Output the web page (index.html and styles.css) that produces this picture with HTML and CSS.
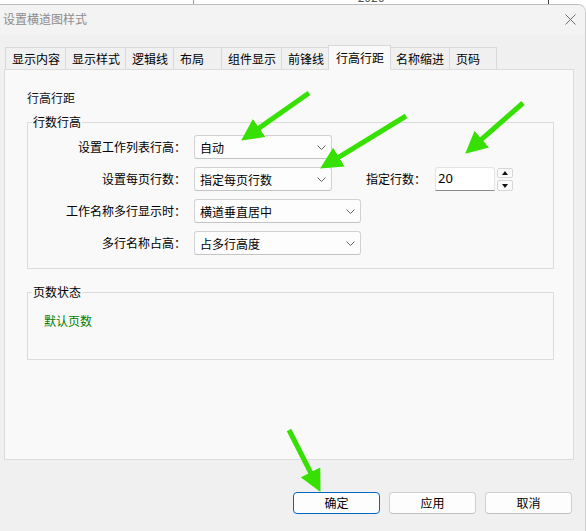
FILE: index.html
```html
<!DOCTYPE html>
<html lang="zh-CN">
<head>
  <meta charset="UTF-8" />
  <meta name="viewport" content="width=device-width,initial-scale=1.0" />
  <title>设置横道图样式</title>
  <link rel="stylesheet" href="styles.css">
</head>
<body>
  <div class="backdrop">
    <div class="bd-cell bd-first"></div>
    <div class="bd-cell bd-year"><span>2026</span></div>
    <div class="bd-cell bd-last"></div>
  </div>

  <div class="dialog">
    <div class="titlebar">
      <span class="title">设置横道图样式</span>
      <span class="close" aria-label="关闭">
        <svg width="11" height="11" viewBox="0 0 11 11"><path d="M0.5 0.5 L10.5 10.5 M10.5 0.5 L0.5 10.5" stroke="#6a6a6a" stroke-width="1" fill="none"/></svg>
      </span>
    </div>

    <div class="dialog-body">
      <div class="tabs">
        <div class="tab">显示内容</div>
        <div class="tab">显示样式</div>
        <div class="tab">逻辑线</div>
        <div class="tab">布局</div>
        <div class="tab">组件显示</div>
        <div class="tab">前锋线</div>
        <div class="tab active">行高行距</div>
        <div class="tab">名称缩进</div>
        <div class="tab last">页码</div>
      </div>

      <div class="panel">
        <div class="panel-title">行高行距</div>

        <fieldset class="group group-rows">
          <legend>行数行高</legend>
          <div class="row">
            <label class="row-label">设置工作列表行高：</label>
            <div class="combo">
              <span>自动</span>
              <svg class="chev" width="9" height="5" viewBox="0 0 9 5"><polyline points="0.5,0.5 4.5,4.5 8.5,0.5" stroke="#606060" fill="none"/></svg>
            </div>
          </div>
          <div class="row">
            <label class="row-label">设置每页行数：</label>
            <div class="combo">
              <span>指定每页行数</span>
              <svg class="chev" width="9" height="5" viewBox="0 0 9 5"><polyline points="0.5,0.5 4.5,4.5 8.5,0.5" stroke="#606060" fill="none"/></svg>
            </div>
            <label class="spin-label">指定行数：</label>
            <div class="spin-input">20</div>
            <div class="spin-btns">
              <div class="spin-btn">
                <svg width="6" height="4" viewBox="0 0 6 4"><polygon points="3,0 6,4 0,4" fill="#111"/></svg>
              </div>
              <div class="spin-btn">
                <svg width="6" height="4" viewBox="0 0 6 4"><polygon points="0,0 6,0 3,4" fill="#111"/></svg>
              </div>
            </div>
          </div>
          <div class="row">
            <label class="row-label">工作名称多行显示时：</label>
            <div class="combo combo-wide">
              <span>横道垂直居中</span>
              <svg class="chev" width="9" height="5" viewBox="0 0 9 5"><polyline points="0.5,0.5 4.5,4.5 8.5,0.5" stroke="#606060" fill="none"/></svg>
            </div>
          </div>
          <div class="row">
            <label class="row-label">多行名称占高：</label>
            <div class="combo combo-wide">
              <span>占多行高度</span>
              <svg class="chev" width="9" height="5" viewBox="0 0 9 5"><polyline points="0.5,0.5 4.5,4.5 8.5,0.5" stroke="#606060" fill="none"/></svg>
            </div>
          </div>
        </fieldset>

        <fieldset class="group group-pages">
          <legend>页数状态</legend>
          <div class="page-state">默认页数</div>
        </fieldset>
      </div>

      <div class="actions">
        <button class="btn btn-default">确定</button>
        <button class="btn">应用</button>
        <button class="btn">取消</button>
      </div>
    </div>
  </div>

  <!-- annotation arrows drawn over the screenshot -->
  <svg class="annotations" width="586" height="531" viewBox="0 0 586 531">
    <defs>
      <marker id="head" markerUnits="userSpaceOnUse" markerWidth="22" markerHeight="22" viewBox="0 0 22 22" refX="11" refY="11" orient="auto">
        <path d="M0,0 L22,11 L0,22 z" fill="#36e000"/>
      </marker>
    </defs>
    <line x1="309" y1="93" x2="250.2" y2="134.3" class="arrow" marker-end="url(#head)"/>
    <line x1="406" y1="116" x2="329.5" y2="162.8" class="arrow" marker-end="url(#head)"/>
    <line x1="523" y1="103" x2="473.5" y2="146.4" class="arrow" marker-end="url(#head)"/>
    <line x1="289" y1="430" x2="315.5" y2="482.1" class="arrow" marker-end="url(#head)"/>
  </svg>
</body>
</html>
```

FILE: styles.css
```css
* { margin: 0; padding: 0; box-sizing: border-box; }
html, body { width: 586px; height: 531px; overflow: hidden; }
body {
  background: #fff;
  font-family: "Noto Sans CJK SC", "Noto Sans", sans-serif;
  font-size: 12px;
  color: #000;
  position: relative;
}

/* window behind the dialog */
.backdrop {
  height: 4px;
  display: flex;
  overflow: hidden;
  background: #fff;
}
.bd-cell { height: 4px; }
.bd-first { width: 194px; border-right: 1px solid #9c9c9c; }
.bd-year {
  width: 355px;
  border-right: 1px solid #3c3c3c;
  text-align: center;
  color: #555;
  font-size: 12px;
  line-height: 12px;
}
.bd-year span { display: block; margin-top: -9px; }
.bd-last { flex: 1; }

/* dialog */
.dialog {
  width: 586px;
  height: 527px;
  background: #f0f0f0;
  border-top: 1px solid #bcbcbc;
  border-right: 1px solid #cfcfcf;
  border-top-right-radius: 8px;
  overflow: hidden;
}
.titlebar {
  height: 30px;
  background: #f3f3f3;
  display: flex;
  align-items: center;
  padding: 0 0 2px 3px;
}
.title { color: #8c8c8c; font-size: 12px; line-height: 16px; }
.close { margin-left: auto; margin-right: 9px; display: flex; }

.dialog-body { padding: 10px 11px 0 4px; }

/* tabs */
.tabs {
  display: flex;
  align-items: flex-end;
  height: 24px;
  padding-left: 1px;
}
.tab {
  height: 22px;
  min-width: 48px;
  padding: 0 5px 0 6px;
  line-height: 21px;
  background: #f0f0f0;
  border-top: 1px solid #d9d9d9;
  border-left: 1px solid #d9d9d9;
  white-space: nowrap;
}
.tab.last { border-right: 1px solid #d9d9d9; }
.tab.active {
  height: 25px;
  line-height: 23px;
  padding: 0 6px 0 7px;
  margin: 0 -2px -1px -1px;
  background: #f9f9f9;
  border: 1px solid #d9d9d9;
  border-bottom: none;
  position: relative;
  z-index: 1;
}

/* tab page */
.panel {
  height: 391px;
  background: #f9f9f9;
  border: 1px solid #dcdcdc;
  padding: 20px 19px 0 22px;
}
.panel-title { line-height: 16px; color: #111; }

.group {
  border: 1px solid #dcdcdc;
  min-width: 0;
}
.group legend {
  margin-left: 4px;
  padding: 0 1px;
  line-height: 16px;
}
.group-rows { margin-top: 8px; padding: 5px 0 13px 0; }
.group-pages { margin-top: 15px; padding: 13px 0 30px 0; }
.page-state { color: #008000; line-height: 16px; padding-left: 16px; }

.row {
  display: flex;
  align-items: center;
  height: 24px;
  margin-bottom: 8px;
}
.row:last-child { margin-bottom: 0; }
.row-label {
  width: 158px;
  margin-right: 8px;
  text-align: right;
  white-space: nowrap;
  line-height: 16px;
}

.combo {
  width: 138px;
  height: 24px;
  display: flex;
  align-items: center;
  justify-content: space-between;
  padding: 0 5px 0 5px;
  background: #fdfdfd;
  border: 1px solid #d2d2d2;
  border-bottom-color: #c4c4c4;
  border-radius: 3px;
}
.combo-wide { width: 167px; }
.chev { display: block; }

.spin-label { margin-left: 34px; white-space: nowrap; line-height: 16px; }
.spin-input {
  width: 60px;
  height: 24px;
  margin-left: 9px;
  padding-left: 2px;
  background: #fff;
  border: 1px solid #e4e4e4;
  border-bottom: 1px solid #8a8a8a;
  border-radius: 3px 3px 0 0;
  font-family: "Noto Sans", "Noto Sans CJK SC", sans-serif;
  font-size: 13px;
  line-height: 20px;
}
.spin-btns {
  display: flex;
  flex-direction: column;
  gap: 2px;
  margin-left: 2px;
  margin-top: 1px;
  align-self: flex-start;
}
.spin-btn {
  width: 16px;
  height: 10px;
  display: flex;
  align-items: center;
  justify-content: center;
  background: #fbfbfb;
  border: 1px solid #d6d6d6;
  border-radius: 2px;
}
.spin-btn + .spin-btn { height: 11px; }

/* buttons */
.actions {
  display: flex;
  justify-content: flex-end;
  gap: 9px;
  margin-top: 32px;
  padding-right: 2px;
}
.btn {
  width: 87px;
  height: 22px;
  font-family: inherit;
  font-size: 12px;
  line-height: 20px;
  color: #000;
  background: #fdfdfd;
  border: 1px solid #d0d0d0;
  border-bottom-color: #c0c0c0;
  border-radius: 4px;
}
.btn-default { border-color: #0067c0; }

/* annotations */
.annotations {
  position: absolute;
  top: 0;
  left: 0;
  pointer-events: none;
}
.arrow { stroke: #36e000; stroke-width: 5; }
```
